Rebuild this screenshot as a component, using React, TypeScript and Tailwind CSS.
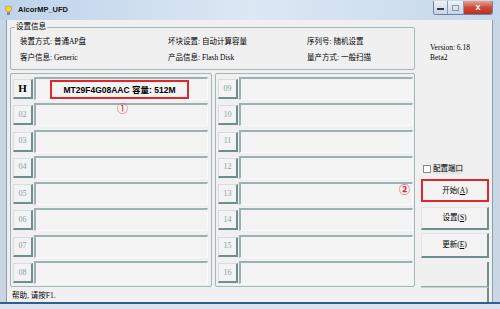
import React from "react";

const leftSlots = ["H", "02", "03", "04", "05", "06", "07", "08"];
const rightSlots = ["09", "10", "11", "12", "13", "14", "15", "16"];

function Slot({ label, children }: { label: string; children?: React.ReactNode }) {
  const isH = label === "H";
  return (
    <div className="flex h-[26.3px] shrink-0 items-start gap-[1px]">
      <div className="mt-[2px] flex h-[20px] w-[20px] shrink-0 items-center justify-center border-t border-l border-r-2 border-b-2 border-t-[#d3dede] border-l-[#d3dede] border-r-[#6f8e8e] border-b-[#6f8e8e] bg-[#f3f3f3]">
        {isH ? (
          <span className="text-[11px] font-bold leading-none text-black">H</span>
        ) : (
          <span className="text-[8px] leading-none text-[#84a2a2]">{label}</span>
        )}
      </div>
      <div className="h-[23px] w-[174px] border-t-2 border-l-2 border-r border-b border-t-[#9cb2b2] border-l-[#9cb2b2] border-r-[#fafafa] border-b-[#fafafa] bg-[#f3f3f3]">
        {children}
      </div>
    </div>
  );
}

function WinButton({ label, hot, className }: { label: string; hot: string; className: string }) {
  return (
    <div
      className={`flex w-[68px] shrink-0 items-center justify-center border-t border-l border-r-2 border-b-2 border-t-[#dfe6e6] border-l-[#dfe6e6] border-r-[#6f8e8e] border-b-[#6f8e8e] bg-[#f3f3f3] ${className}`}
    >
      <span>
        {label}(<span className="underline">{hot}</span>)
      </span>
    </div>
  );
}

export default function App() {
  return (
    <div className="relative flex h-[309px] w-[500px] flex-col overflow-hidden bg-[#c9d7e5] font-[family-name:'Liberation_Serif','Noto_Sans_CJK_SC',serif] text-[7.5px] leading-[10px] text-black">
      {/* title bar */}
      <div className="flex h-[20px] shrink-0 items-center bg-linear-to-r from-[#bed3ea] via-[#dce8f4] to-[#c5d8ec]">
        <svg width="9" height="11" viewBox="0 0 9 11" className="ml-[4px]">
          <circle cx="4.5" cy="4" r="3" fill="#f6d53a" stroke="#b8901a" strokeWidth="0.6" />
          <rect x="3" y="7" width="3" height="3" fill="#8a8a8a" />
          <line x1="0.5" y1="1" x2="1.8" y2="2" stroke="#e0a020" strokeWidth="0.7" />
          <line x1="8.5" y1="1" x2="7.2" y2="2" stroke="#e0a020" strokeWidth="0.7" />
        </svg>
        <span className="ml-[5px] font-[family-name:'Liberation_Sans',sans-serif] text-[7.5px] font-bold text-[#111]">
          AlcorMP_UFD
        </span>
        <div className="mt-[1px] mr-[7px] ml-auto flex h-[14px] self-start overflow-hidden rounded-b-[3px] border border-t-0 border-[#6f829a]">
          <div className="flex w-[14px] items-center justify-center border-r border-[#8a9bb0] bg-linear-to-b from-[#eef3f8] to-[#c6d4e4]">
            <div className="mt-[3px] h-[2px] w-[7px] border border-[#2c3a4c] bg-white" />
          </div>
          <div className="flex w-[16px] items-center justify-center border-r border-[#8a9bb0] bg-linear-to-b from-[#eef3f8] to-[#c6d4e4]">
            <div className="h-[6px] w-[7px] border border-[#8c9aab]" />
          </div>
          <div className="flex w-[28px] items-center justify-center bg-linear-to-b from-[#e3a294] via-[#cc4a39] to-[#b8321f]">
            <span className="font-[family-name:'Liberation_Sans',sans-serif] text-[9px] font-bold leading-none text-white">x</span>
          </div>
        </div>
      </div>

      <div className="flex h-[282px] shrink-0">
        <div className="w-[7px] border-r border-[#8e9eb1] bg-[#c9d7e5]" />

        {/* client */}
        <div className="flex w-[485px] flex-col overflow-hidden bg-[#f0f0f0] pl-[3px]">
          <div className="flex h-[50px] shrink-0">
            <fieldset className="mt-[2px] h-[48px] w-[405px] rounded-[2px] border border-[#a3b7b7]">
              <legend className="ml-[4px] px-[1px]">设置信息</legend>
              <div className="grid grid-cols-[148px_139px_1fr] grid-rows-[16px_16px] items-center pt-[2px] pl-[9px]">
                <span>装置方式: 普通AP盘</span>
                <span>坏块设置: 自动计算容量</span>
                <span>序列号: 随机设置</span>
                <span>客户信息: Generic</span>
                <span>产品信息: Flash Disk</span>
                <span>量产方式: 一般扫描</span>
              </div>
            </fieldset>
            <div className="mt-[23px] ml-[15px] flex flex-col">
              <span>Version: 6.18</span>
              <span>Beta2</span>
            </div>
          </div>

          <div className="mt-[3px] flex h-[214px] shrink-0">
            <div className="flex h-[214px] w-[202px] flex-col overflow-hidden rounded-[2px] border border-[#a3b7b7] pt-[3px] pl-[2px]">
              {leftSlots.map((s) => (
                <Slot key={s} label={s}>
                  {s === "H" && (
                    <div className="mt-[1px] ml-[14px] flex h-[19px] w-[139px] items-center justify-center border-2 border-[#e0262a] font-[family-name:'Liberation_Sans','Noto_Sans_CJK_SC',sans-serif] text-[8.5px] font-bold">
                      MT29F4G08AAC 容量: 512M
                    </div>
                  )}
                </Slot>
              ))}
            </div>
            <div className="ml-[3px] flex h-[214px] w-[200px] flex-col overflow-hidden rounded-[2px] border border-[#a3b7b7] pt-[3px] pl-[2px]">
              {rightSlots.map((s) => (
                <Slot key={s} label={s} />
              ))}
            </div>

            <div className="ml-[6px] flex h-[214px] w-[68px] flex-col">
              <div className="mt-[90px] flex h-[12px] shrink-0 items-center">
                <div className="ml-[2px] h-[8px] w-[8px] border border-[#8a8a8a] bg-white" />
                <span className="ml-[2px] bg-[#e4e4e4]">配置端口</span>
              </div>
              <div className="mt-[4px] flex h-[23px] w-[68px] shrink-0 items-center justify-center border-2 border-[#e0262a] bg-[#f3f3f3]">
                <span>
                  开始(<span className="underline">A</span>)
                </span>
              </div>
              <WinButton label="设置" hot="S" className="mt-[5px] h-[23px]" />
              <WinButton label="更新" hot="E" className="mt-[3px] h-[25px]" />
              <div className="mt-[4px] h-[25px] w-[68px] shrink-0 border-r-2 border-b border-r-[#6f8e8e] border-b-[#8fa8a8]" />
            </div>
          </div>

          <div className="flex h-[15px] shrink-0">
            <span className="w-[60px] pt-[4px] pl-[2px]">帮助, 请按F1.</span>
            <div className="ml-[351px] h-[15px] w-[68px] border-r-2 border-t border-r-[#6f8e8e] border-t-[#c9d4d4]" />
          </div>
        </div>

        <div className="w-[8px] border-l border-[#8e9eb1] bg-[#c9d7e5]" />
      </div>

      <div className="h-[7px] shrink-0 border-t-2 border-[#2f5f90] bg-[#dbe4ee]" />

      {/* annotations */}
      <span className="absolute top-[103px] left-[117px] font-[family-name:'Noto_Sans_CJK_SC',sans-serif] text-[11px] leading-none text-[#e0262a]">
        ①
      </span>
      <span className="absolute top-[184px] left-[399px] font-[family-name:'Noto_Sans_CJK_SC',sans-serif] text-[11px] font-bold leading-none text-[#e0262a]">
        ②
      </span>
    </div>
  );
}
